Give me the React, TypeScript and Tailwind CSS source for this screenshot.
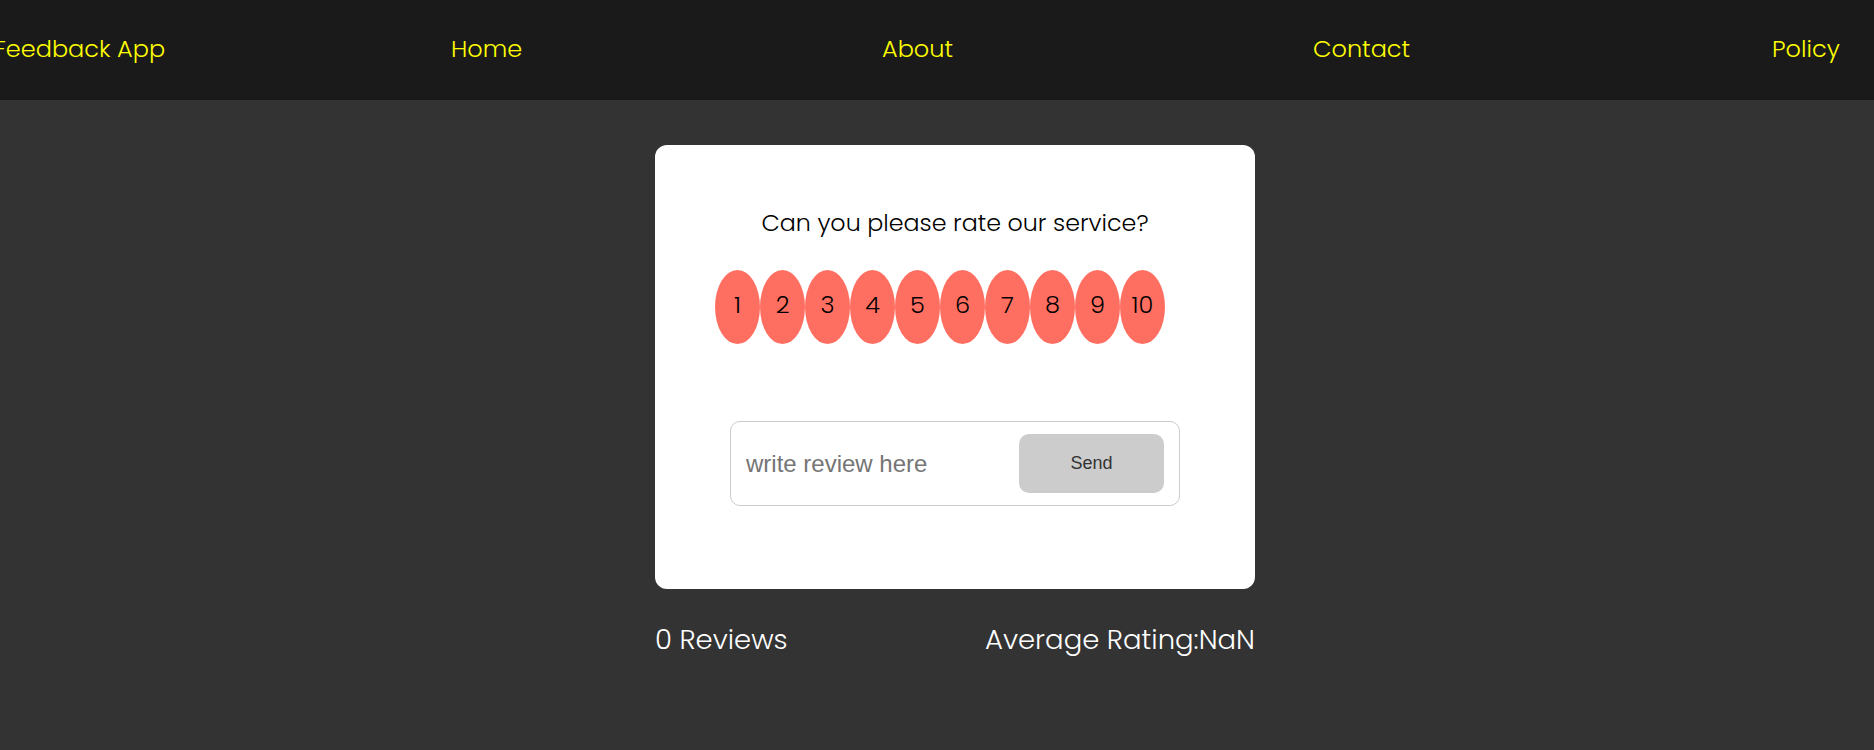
import React from "react";

const links = ["Home", "About", "Contact", "Policy"];
const ratings = [1, 2, 3, 4, 5, 6, 7, 8, 9, 10];

export default function App() {
  return (
    <div className="min-h-screen w-full bg-[#333333] font-['Poppins','Open_Sans',sans-serif] font-light overflow-hidden">
      <header className="h-[100px] bg-[#1a1a1a] flex items-center pb-[2px]">
        <nav className="-ml-[6px] w-full grid grid-cols-[457px_431px_431px_459px_1fr] items-center text-[24px] text-[#ffff00]">
          <span className="font-light">Feedback App</span>
          {links.map((l) => (
            <a key={l} href="#" className="font-light">
              {l}
            </a>
          ))}
        </nav>
      </header>

      <main className="ml-[655px] w-[600px] pt-[45px]">
        <div className="h-[444px] bg-white rounded-[12px] flex flex-col">
          <h2 className="pt-[62px] text-center text-[23.8px] leading-[32px] text-black font-light">
            Can you please rate our service?
          </h2>
          <ul className="mt-[31px] ml-[60px] flex">
            {ratings.map((n) => (
              <li
                key={n}
                className="w-[45px] h-[74px] rounded-[50%] bg-[#ff6f61] flex items-center justify-center text-[24px] text-black font-light pb-[4px]"
              >
                {n}
              </li>
            ))}
          </ul>
          <form
            className="mt-[77px] mx-auto w-[450px] h-[85px] border border-[#cccccc] rounded-[10px] flex items-center justify-between pl-[15px] pr-[15px]"
            onSubmit={(e) => e.preventDefault()}
          >
            <input
              type="text"
              placeholder="write review here"
              className="w-[260px] outline-none font-['Liberation_Sans',Arial,sans-serif] font-normal text-[24px] placeholder:text-[#757575]"
            />
            <button
              type="submit"
              className="w-[145px] h-[59px] bg-[#cccccc] rounded-[10px] font-['Liberation_Sans',Arial,sans-serif] font-normal text-[18px] text-[#333333]"
            >
              Send
            </button>
          </form>
        </div>
        <div className="mt-[27px] flex justify-between text-[27.5px] leading-[48px] text-white font-light">
          <span>0 Reviews</span>
          <span>Average Rating:NaN</span>
        </div>
      </main>
    </div>
  );
}
